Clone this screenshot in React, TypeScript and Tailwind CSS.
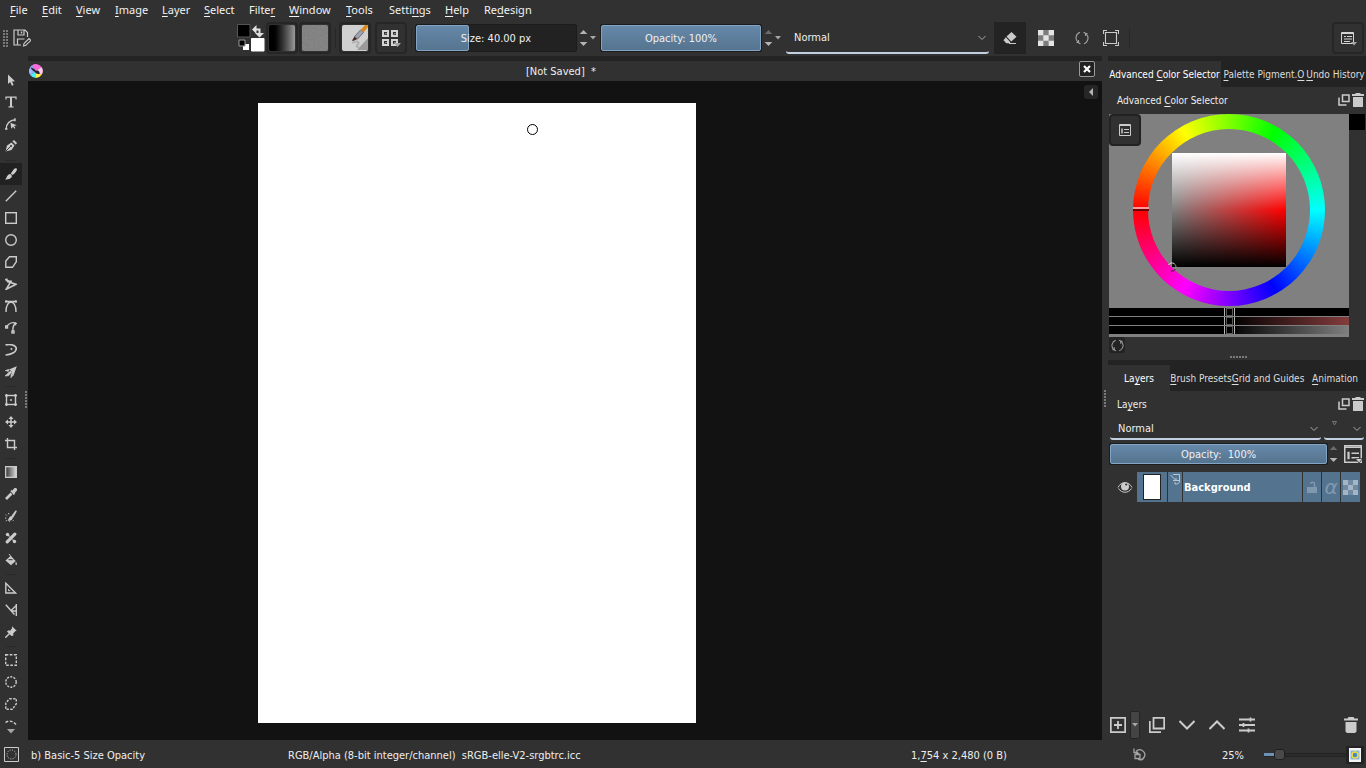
import type { ReactNode } from 'react';

const hotkey = (text: string, at: number) => (
  <>
    {text.slice(0, at)}
    <span className="underline underline-offset-2">{text[at]}</span>
    {text.slice(at + 1)}
  </>
);

const menus: [string, number, string][] = [
  ['File', 0, 'w-8'],
  ['Edit', 0, 'w-[34px]'],
  ['View', 0, 'w-[39px]'],
  ['Image', 0, 'w-[47px]'],
  ['Layer', 0, 'w-[42px]'],
  ['Select', 0, 'w-[45px]'],
  ['Filter', 5, 'w-10'],
  ['Window', 0, 'w-[57px]'],
  ['Tools', 0, 'w-[43px]'],
  ['Settings', 5, 'w-14'],
  ['Help', 0, 'w-[39px]'],
  ['Redesign', 2, 'w-16'],
];

function Icon({ size = 12, label, children }: { size?: number; label?: string; children: ReactNode }) {
  return (
    <svg
      width={size}
      height={size}
      viewBox={`0 0 ${size} ${size}`}
      fill="none"
      stroke="#cbcbcb"
      strokeWidth="1.4"
      className="shrink-0"
      aria-label={label}
    >
      {children}
    </svg>
  );
}

const F = '#cbcbcb';

const tools: [string, ReactNode][][] = [
  [
    ['Select Shapes', <path d="M3 0.5v9.6l2.2-2 1.7 3.7 1.7-.8L7 7.4l3-.2z" fill={F} stroke="none" />],
    ['Text', <path d="M.4.5h11.2v3h-1L10.300 1.800H7v8.500l1.600.300v.900H3.400v-.900l1.600-.300V1.800H1.700L1.400 3.500H.400z" fill={F} stroke="none" />],
    ['Edit Shapes', <><path d="M1.200 11c0-5 3.500-9 9-9.300M0 11h2.500M10 .3v3" /><path d="M5.500 4.800l6.300 2.400-2.700.9 1.300 2-1 .7-1.300-2-1.900 1.900z" fill={F} stroke="none" /></>],
    ['Calligraphy', <><path d="M.500 11.500L2 5.500 6.500 2.500l3 3L6.500 10z" fill={F} stroke="none" /><path d="M7.300 1.200L9 0l3 3-1.200 1.700z" fill={F} stroke="none" /><path d="M.5 11.500L5.500 6.500" stroke="#313131" strokeWidth="1" /><circle cx="6" cy="6" r="1" fill="#313131" stroke="none" /></>],
  ],
  [
    ['Freehand Brush', <><path d="M5.800 5.500L8.800 1.200C10 0 12.500-.3 11.800 2.200 11.300 4 9 6 7.300 7z" fill={F} stroke="none" /><path d="M5.300 6l1.500 1.600c.5 2.500-2.500 4-6.800 4C2 10.500 1.400 6.500 5.300 6z" fill={F} stroke="none" /></>],
    ['Line', <path d="M.8 11.200L11.200.8" />],
    ['Rectangle', <rect x=".7" y=".7" width="10.600" height="10.600" />],
    ['Ellipse', <circle cx="6" cy="6" r="5.300" />],
    ['Polygon', <path d="M4.500.7h6.800v5L7.500 11.300H.8V5z" />],
    ['Polyline', <path d="M1.500.5L2.500 3.500 11 6.300 1.300 11.200 6.500 2.500M0 1.500L5 3.500" strokeWidth="1.600" />],
    ['Bezier Curve', <><path d="M0 1.500h12M1 12c0-6 2-9.500 5-10 3 .5 5 4 5 10" /><circle cx="1.300" cy="1.500" r="1.200" fill={F} stroke="none" /><circle cx="10.700" cy="1.500" r="1.200" fill={F} stroke="none" /></>],
    ['Freehand Path', <><path d="M1.500 4.800C4 1 8 0 11 1.500 8 3 7.500 5 8 9M10.500 .300v3" /><rect x=".5" y="4" width="2" height="2" /><rect x="7" y="9" width="2" height="2" /></>],
    ['Dynamic Brush', <><path d="M.5 1C5-.3 11 1 11.300 4.500 11.300 8 6 11 .5 11" strokeWidth="1.600" /><circle cx="6.500" cy="5" r="1" fill={F} stroke="none" /></>],
    ['Multibrush', <><path d="M11.800.2L7 6.300 4.500 3.300z M11.800.2L8.500 9.500 6.300 6.500z" fill={F} stroke="none" /><path d="M.3 4.500l4-1.200-1 2.200zM0 10l5.300-5 1.200 1.300-3 3.500zM5.800 11.800l.5-4.300 2 1.500z" fill={F} stroke={F} strokeWidth=".6" /></>],
  ],
  [
    ['Transform', <><rect x="1.500" y="1.500" width="9" height="9" /><path d="M0 1.500h3M1.500 0v3M9 1.500h3M10.500 0v3M0 10.500h3M1.500 9v3M9 10.500h3M10.500 9v3" /><circle cx="6" cy="6" r="1" fill={F} stroke="none" /></>],
    ['Move', <><path d="M6 1.500v9M1.500 6h9" /><path d="M6 0l2.500 3h-5zM6 12l2.500-3h-5zM0 6l3-2.500v5zM12 6L9 3.500v5z" fill={F} stroke="none" /></>],
    ['Crop', <path d="M2.500 0v9.500H12M0 2.500h9.500V12" />],
  ],
  [
    ['Gradient', <><defs><linearGradient id="tg"><stop stopColor="#333" /><stop offset="1" stopColor="#ddd" /></linearGradient></defs><rect x=".6" y=".6" width="10.800" height="10.800" fill="url(#tg)" /></>],
    ['Color Sampler', <><path d="M6 2.500l3.500 3.800" strokeWidth="1.800" /><path d="M1 11l5.500-5.500" strokeWidth="2.600" /><path d="M7.500 3.500l2-2.500c1.200-1 2.500.2 1.500 1.500L8.800 5z" fill={F} stroke={F} /></>],
    ['Colorize Mask', <><path d="M6 6.500L10.300.8c.8-.8 1.700 0 1.300.9L8 8z" fill={F} stroke="none" /><path d="M6 6.300l1.800 1.500C7.500 10.500 5 11 2.500 10.500 4 9.500 3.500 7 6 6.300z" fill={F} stroke="none" /><path d="M.8 4.500l1 1M3.500 3l.4 1.300M0 8h1.300M.8 11l1-.8M4.500 12v-.8M8.500 11l-.6-.8" strokeWidth="1" /></>],
    ['Smart Patch', <><path d="M2.200 9.800L9.800 2.200" strokeWidth="3.200" strokeLinecap="round" /><circle cx="2.500" cy="2.500" r="1.700" fill={F} stroke="none" /><circle cx="9.500" cy="9.500" r="1.700" fill={F} stroke="none" /><path d="M2.500 2.500l2 2M7.500 7.500l2 2" strokeWidth="1.200" /></>],
    ['Fill', <><path d="M.5 6.500L5.500 2l5.200 5L6 11.300z" fill={F} stroke="none" /><path d="M4 0l4 5" strokeWidth="1" /><path d="M3.500 5.700h4" stroke="#313131" strokeWidth="1" /><path d="M11 7.500c1.200 2.500 1.200 3.500.2 3.500s-1-1.500-.2-3.500z" fill={F} stroke="none" /></>],
  ],
  [
    ['Assistant', <><path d="M.8 1.200v9.800h9.800z" /><path d="M3.500 7v1.700h1.700" strokeWidth="1" /></>],
    ['Measure', <path d="M.8.800l8.700 9.700M11.300 0v12M11.300 1.500L6 6.500M6.500 7h5" />],
    ['Reference Images', <><path d="M7 .3l4.700 4.500-1.500.5-2 2.200.2 2L6.500 10 1.900 5.500l1.400-1 2.200.1L7 2.200z" fill={F} stroke="none" /><path d="M4.500 7.500L.3 11.700" /></>],
  ],
  [
    ['Rectangular Selection', <rect x=".7" y=".7" width="10.600" height="10.600" strokeDasharray="2.600 1.500" />],
    ['Elliptical Selection', <circle cx="6" cy="6" r="5.200" strokeDasharray="2.100 1.200" />],
    ['Polygonal Selection', <path d="M4.500.7h6.800v5L7.500 11.300H.8V5z" strokeDasharray="2.300 1.400" />],
  ],
];

const fill = 'bg-gradient-to-b from-[#6688a9] to-[#55748f] border border-[#82a5c6] rounded-[2px]';

function Slider({ name, text, width, bar, low }: { name: string; text: string; width: string; bar: string; low?: boolean }) {
  return (
    <label className={`relative flex ${width} ${low ? 'h-[22px]' : 'h-7'} rounded-[2px] border border-[#1c1c1c] bg-[#222222] text-[11px] text-[#f0f0f0]`}>
      <span className={`${bar} ${fill}`} />
      <span className="absolute inset-0 flex items-center justify-center whitespace-pre pt-[2px]">{text}</span>
      <input type="range" aria-label={name} defaultValue={100} className="absolute inset-0 w-full opacity-0" />
    </label>
  );
}

function Spin({ dimUp }: { dimUp?: boolean }) {
  return (
    <svg width="9" height="18" viewBox="0 0 9 18" className="shrink-0" aria-hidden="true">
      <path d="M4.500 1L8.300 5H.700z" fill={dimUp ? '#6b6b6b' : '#b4b4b4'} />
      <path d="M4.500 17L8.300 13H.700z" fill="#b4b4b4" />
    </svg>
  );
}

function Down({ className = '' }: { className?: string }) {
  return (
    <svg width="6" height="4" viewBox="0 0 6 4" className={`shrink-0 ${className}`} fill="#a6a6a6" aria-hidden="true">
      <path d="M0 0h6L3 3.500z" />
    </svg>
  );
}

function Combo({ label, width, height, value }: { label: string; width: string; height: string; value: string }) {
  return (
    <div className={`relative flex ${width} ${height} items-center`}>
      <select aria-label={label} className="h-full w-full appearance-none rounded-[3px] border-b-2 border-[#c3cfe2] bg-transparent pl-2 pt-[2px] text-[11px] text-[#eeeeee] outline-none">
        <option>{value}</option>
      </select>
      <svg width="8" height="6" viewBox="0 0 8 6" className="pointer-events-none absolute right-[3px]" fill="none" stroke="#a9a9a9" aria-hidden="true">
        <path d="M.5 1l3.500 3.500L7.500 1" />
      </svg>
    </div>
  );
}

function Grip({ rows, cols = 1, horizontal }: { rows: number; cols?: number; horizontal?: boolean }) {
  return (
    <div className={`grid gap-px ${horizontal ? 'grid-flow-col' : cols === 2 ? 'grid-cols-2' : 'grid-cols-1'}`}>
      {Array.from({ length: rows * cols }, (_, i) => (
        <span key={i} className="size-[2px] bg-[#7a7a7a]" />
      ))}
    </div>
  );
}

const Separator = () => <span className="h-5 w-px shrink-0 bg-[#282828]" />;

function Checker({ size, light, dark }: { size: number; light: string; dark: string }) {
  return (
    <svg width={size} height={size} viewBox="0 0 3 3" aria-hidden="true">
      <path d="M0 0h3v3H0z" fill={dark} />
      <path d="M0 0h1v1H0zM2 0h1v1H2zM1 1h1v1H1zM0 2h1v1H0zM2 2h1v1H2z" fill={light} />
    </svg>
  );
}

function Cycle({ size }: { size: number }) {
  return (
    <svg width={size} height={size} viewBox="0 0 14 14" fill="none" stroke="#a2a2a2" strokeWidth="1.100" aria-hidden="true">
      <path d="M5 1.300A6 6 0 0 0 2.800 11.200M9 12.700A6 6 0 0 0 11.200 2.800" />
      <path d="M5.500 12.800A6 6 0 0 1 3.300 11.500M8.500 1.200A6 6 0 0 1 10.700 2.500" />
      <path d="M3.500 9v2.500H1.500M10.500 5V2.500h2" />
    </svg>
  );
}

function ListIcon({ size, arrow }: { size: number; arrow?: boolean }) {
  return (
    <svg width={size} height={size} viewBox="0 0 12 12" fill="none" stroke={F} aria-hidden="true">
      <path d="M.5.500h11v11H.500z" />
      <path d="M0 1.500h12M5 5.500h5M5 8.500h5" />
      <path d="M3 4.500v5" strokeWidth="1.500" />
      {arrow && <path d="M7.500 9h5l-2.500 3z" fill={F} stroke="#313131" strokeWidth=".5" />}
    </svg>
  );
}

function ToolButton({ label, children }: { label: string; children: ReactNode }) {
  return (
    <button aria-label={label} className="flex size-8 shrink-0 items-center justify-center rounded-[4px] border-2 border-[#262626]">
      {children}
    </button>
  );
}

function MenuBar() {
  return (
    <nav className="flex h-5 shrink-0 items-center pl-[10px] font-['Noto_Sans',sans-serif] text-[11px] text-[#f2f2f2]">
      {menus.map(([name, at, width]) => (
        <button key={name} className={`${width} text-left`}>{hotkey(name, at)}</button>
      ))}
    </nav>
  );
}

function MainToolbar() {
  return (
    <div className="flex h-9 shrink-0 items-center pl-[3px] pr-[2px]">
      <Grip rows={6} cols={2} />
      <button aria-label="Save" className="ml-[5px]">
        <Icon size={18}>
          <path d="M14.500 8V3.500L12 1H1v15h7M5 1v5h6V1M4.500 16v-6h7" strokeWidth="1.200" />
          <path d="M8.500 2.500v2" />
          <path d="M10.500 17l.5-2.500 5-5 1.800 1.800-5 5z" strokeWidth="1.100" />
        </Icon>
      </button>

      <button aria-label="Foreground and background colors" className="ml-[206px]">
        <svg width="28" height="28" viewBox="0 0 28 28">
          <path d="M.5.5h12.500v12.500H.5z" fill="#000" stroke="#555" />
          <path d="M14.500 14.500H27V27H14.500z" fill="#fff" stroke="#fff" />
          <path d="M6 20h6v6H6z" fill="#fff" />
          <path d="M2 16h6v6H2z" fill="#000" stroke="#999" />
          <path d="M15 5.500L19.500 1v3.500h4V9H27l-4.500 4.500L18 9h3.500V6.500h-2V10z" fill="#e0e0e0" />
        </svg>
      </button>
      <div className="ml-px flex gap-px">
        <ToolButton label="Gradients">
          <span className="size-[26px] rounded-[2px] bg-linear-to-r from-black from-10% to-[#9a9a9a]" />
        </ToolButton>
        <ToolButton label="Patterns">
          <svg width="26" height="26" aria-hidden="true">
            <filter id="grain"><feTurbulence type="fractalNoise" baseFrequency=".5" numOctaves="2" /><feColorMatrix values="0 0 0 0 .5 0 0 0 0 .5 0 0 0 0 .5 .5 0 0 0 0" /></filter>
            <rect width="26" height="26" rx="2" fill="#7b7b7b" />
            <rect width="26" height="26" filter="url(#grain)" opacity=".5" />
          </svg>
        </ToolButton>
      </div>
      <div className="ml-1 flex items-center gap-[3px]">
        <Separator />
        <ToolButton label="Brush editor">
          <svg width="26" height="26" aria-hidden="true">
            <rect width="26" height="26" rx="2" fill="#d0d0d0" />
            <path d="M26 13L15 25h11z" fill="#777" opacity=".6" />
            <path d="M10 18c5-3 8-1 6 1s-2 3 1 3" fill="none" stroke="#b0b0b0" strokeWidth="2" />
            <path d="M10 15.500l2.500-4 3 2.500-4.500 2z" fill="#4a2a20" />
            <path d="M12.500 11.500l6-6.500 3 2.500-6 6.500z" fill="#a0a2b4" stroke="#5d5468" strokeWidth=".8" />
            <path d="M18.500 5L23 0h3v2l-4.500 5.500z" fill="#d88a22" />
          </svg>
        </ToolButton>
      </div>
      <div className="ml-1 flex items-center gap-1">
        <ToolButton label="Brush presets">
          <svg width="20" height="20" viewBox="0 0 20 20" fill="none" stroke="#d4d4d4" strokeWidth="2" aria-hidden="true">
            <path d="M2 3h5v5H2zM11 3h5v5h-5zM2 12h5v5H2zM11 12h5v5h-5z" />
            <path d="M4 6.500l1.500-1.500M13 6.500l1.500-1.500M4 15.500L5.500 14M13 15.500l1.500-1.500" strokeWidth="1" />
            <path d="M13 15h7l-3.500 4z" fill="#a6a6a6" stroke="none" />
          </svg>
        </ToolButton>
        <Separator />
      </div>

      <div className="ml-[3px] flex items-center">
        <Slider name="Size" text="Size: 40.00 px" width="w-[162px]" bar="w-1/3" />
        <div className="ml-[2px] mr-1 flex w-[17px] items-center justify-between"><Spin /><Down /></div>
        <Slider name="Opacity" text="Opacity: 100%" width="w-[162px]" bar="w-full" />
        <div className="ml-[2px] mr-[5px] flex w-[17px] items-center justify-between"><Spin dimUp /><Down /></div>
        <Combo label="Blending mode" width="w-[203px]" height="h-[31px]" value="Normal" />
      </div>

      <button aria-label="Eraser mode" className="ml-[5px] flex size-8 items-center justify-center bg-[#232323]">
        <svg width="14" height="14" viewBox="0 0 14 14" fill={F} aria-hidden="true">
          <path d="M8.500 1L13.500 5.800 8.300 10.500 3.500 5.500zM2.800 6.200l4.700 5-1 1H3.300L.5 9.300zM6 12h7v1H6z" />
        </svg>
      </button>
      <button aria-label="Preserve alpha" className="ml-3"><Checker size={16} light="#e4e4e4" dark="#7c7c7c" /></button>
      <button aria-label="Reload preset" className="ml-[21px]"><Cycle size={14} /></button>
      <button aria-label="Wrap around mode" className="ml-[14px]">
        <Icon size={16}><path d="M2.500 2.500h11v11h-11zM.500 4V.500H4M12 .500h3.500V4M15.500 12v3.500H12M4 15.500H.500V12" strokeWidth="1.100" /></Icon>
      </button>
      <div className="ml-[10px] flex"><Separator /></div>
      <div className="ml-auto">
        <ToolButton label="Choose workspace">
          <svg width="18" height="16" viewBox="0 0 18 16" fill="none" stroke="#d4d4d4" aria-hidden="true">
            <path d="M2.500 2.500h12v11h-12zM2 3.500h13" />
            <path d="M5 6.500h2M8 6.500h5M5 9h8M5 11.500h6" />
            <path d="M12 12h6l-3 3.500z" fill="#a6a6a6" stroke="none" />
          </svg>
        </ToolButton>
      </div>
    </div>
  );
}

function Toolbox() {
  return (
    <aside className="flex w-7 shrink-0 overflow-hidden pt-[13px]">
      <div className="flex w-[22px] flex-col">
        {tools.map((group, g) => (
          <div key={g}>
            {g > 0 && <div className="flex h-[6px] items-center justify-center"><span className="h-px w-[10px] bg-[#292929]" /></div>}
            {group.map(([name, glyph]) => (
              <button key={name} aria-label={name} className={`flex h-[22px] w-[22px] items-center justify-center ${name === 'Freehand Brush' ? 'bg-[#212121]' : ''}`}>
                <Icon>{glyph}</Icon>
              </button>
            ))}
          </div>
        ))}
        <button aria-label="More tools" className="flex flex-col items-center gap-[3px] pt-[5px]">
          <svg width="12" height="6" viewBox="0 0 12 6" fill="none" stroke={F} strokeWidth="1.400"><path d="M.5 2.500C4 0 8 1 11 4.500" strokeDasharray="3 1.500" /></svg>
          <svg width="8" height="5" viewBox="0 0 8 5" fill="#a6a6a6"><path d="M0 0h8L4 4.500z" /></svg>
        </button>
      </div>
      <div className="ml-[3px] flex items-center pb-[10px]"><Grip rows={6} /></div>
    </aside>
  );
}

function Document() {
  return (
    <main className="flex min-w-0 flex-1 flex-col border-t-[5px] border-[#232323]">
      <div className="flex h-5 shrink-0 items-center pl-[1px] pr-[7px] text-[11px] text-[#eeeeee]">
        <svg width="14" height="14" viewBox="0 0 14 14" aria-hidden="true">
          <path d="M7 7L3 1.300A6.900 6.900 0 0 1 12.500 3z" fill="#ff6adf" />
          <path d="M7 7l5.500-4A6.900 6.900 0 0 1 12.500 11z" fill="#ffc9ee" />
          <path d="M7 7l5.500 4A6.900 6.900 0 0 1 7 13.900z" fill="#fff04a" />
          <path d="M7 7v6.900A6.900 6.900 0 0 1 1.200 11z" fill="#4af0ff" />
          <path d="M7 7l-5.800 4A6.900 6.900 0 0 1 3 1.300z" fill="#9fb8ff" />
          <path d="M1.500 3.500c2 0 4 1.500 5.500 3.500 2-1 3.500 0 3.700 2.700C8.500 10.500 6.500 9.500 6 8 4 7 2.500 5.500 1.500 3.500z" fill="#2c2433" />
        </svg>
        <span className="flex-1 whitespace-pre pt-[2px] text-center">[Not Saved]{'  '}*</span>
        <button aria-label="Close document" className="-mt-1 flex size-4 items-center justify-center rounded-[2px] border border-[#9a9a9a] bg-[#222222]">
          <svg width="8" height="8" viewBox="0 0 8 8" stroke="#fff" strokeWidth="2.200"><path d="M1 1l6 6M7 1L1 7" /></svg>
        </button>
      </div>
      <div className="relative flex-1 overflow-hidden bg-[#121212] pl-[230px] pt-[22px]">
        <div className="relative h-[620px] w-[438px] bg-white">
          <span className="absolute left-[269px] top-[21px] size-[11px] rounded-full border border-black" />
        </div>
        <button aria-label="Show floating message" className="absolute right-1 top-1 flex size-[14px] items-center justify-center rounded-[3px] bg-[#262626]">
          <svg width="4" height="8" viewBox="0 0 4 8" fill="#b4b4b4"><path d="M4 0v8L0 4z" /></svg>
        </button>
      </div>
    </main>
  );
}

function DockTitle({ children }: { children: ReactNode }) {
  return (
    <header className="flex h-[27px] shrink-0 items-center justify-between pl-[9px] pr-[2px] text-[10px] text-[#eeeeee]">
      <h2 className="pt-px">{children}</h2>
      <div className="flex items-center gap-[2px] pb-[2px]">
        <button aria-label="Float docker">
          <Icon size={12}><path d="M4.500 1h6.500v6.500H4.500z" strokeWidth="1.500" /><path d="M1 3.500V11h7.500" strokeWidth="1.500" /></Icon>
        </button>
        <button aria-label="Close docker">
          <svg width="12" height="14" viewBox="0 0 12 14" fill={F}><path d="M4 0h4l1 1h3v2H0V1h3zM1 4h10v10H1z" /></svg>
        </button>
      </div>
    </header>
  );
}

const tab = 'flex h-full shrink-0 items-center justify-center whitespace-nowrap pt-[2px]';

function Handle() {
  return (
    <span className="absolute left-[115px] flex h-full w-[11px] border-x border-[#b4b4b4] px-px">
      <span className="w-full border border-[#5a5a5a]" />
    </span>
  );
}

function ColorDock() {
  return (
    <section className="flex shrink-0 flex-col">
      <div role="tablist" className="flex h-[31px] overflow-hidden border-t-[5px] border-[#232323] bg-[#232323] text-[10px] text-[#dddddd]">
        <button role="tab" className={`${tab} w-[113px] bg-[#313131] text-white`}><span>{hotkey('Advanced Color Selector', 9)}</span></button>
        <button role="tab" className={`${tab} w-9`}><span>{hotkey('Palette', 0)}</span></button>
        <button role="tab" className={`${tab} w-12`}><span>Pigment.<span className="underline underline-offset-2">O</span></span></button>
        <button role="tab" className={`${tab} w-[61px]`}><span>{hotkey('Undo History', 0)}</span></button>
      </div>
      <DockTitle>{hotkey('Advanced Color Selector', 9)}</DockTitle>
      <div className="flex pl-px">
        <div className="flex w-60 flex-col bg-[#808080] pb-[3px]">
          <div className="relative flex h-[194px] items-start justify-center">
            <button aria-label="Selector settings" className="absolute left-0 top-0 flex size-8 items-center justify-center rounded-[4px] border-2 border-[#222222] bg-[#313131]">
              <ListIcon size={12} />
            </button>
            <div className="flex size-48 items-center justify-center rounded-full bg-[conic-gradient(from_270deg,#f00,#ff0,#0f0,#0ff,#00f,#f0f,#f00)]">
              <div className="flex size-[162px] items-center justify-center rounded-full bg-[#808080]">
                <div className="size-[114px] bg-[linear-gradient(to_bottom,#fff,rgba(255,255,255,0)_50%,rgba(0,0,0,0)_50%,#000),linear-gradient(to_right,#808080,#f00)]" />
              </div>
            </div>
            <span className="absolute left-6 top-[93px] h-1 w-4 border-b-2 border-t-2 border-b-[#6b0000] border-t-[#ff9a9a]" />
            <svg width="10" height="10" viewBox="0 0 10 10" fill="none" className="absolute left-[58px] top-[148px]">
              <path d="M1.500 3A4 4 0 0 1 7 1.500" stroke="#ddd" /><path d="M7 1.500A4 4 0 0 1 8.500 7" stroke="#999" /><path d="M8.500 7A4 4 0 0 1 4 9" stroke="#222" />
            </svg>
          </div>
          <div className="flex flex-col gap-px">
            <div className="relative h-2 bg-black"><Handle /></div>
            <div className="relative h-2 bg-[linear-gradient(to_right,#000_50%,#843c3c)]"><Handle /></div>
            <div className="relative h-2 bg-[linear-gradient(to_right,#000_50%,#808080)]"><Handle /></div>
          </div>
        </div>
        <span className="size-4 bg-black" />
      </div>
      <div className="flex h-[23px] items-start pl-px">
        <button aria-label="Refresh history" className="flex size-4 items-center justify-center rounded-[3px] bg-[#232323]"><Cycle size={13} /></button>
        <div className="ml-[105px] flex h-full items-end pb-[2px]"><Grip rows={6} horizontal /></div>
      </div>
    </section>
  );
}

function LayersDock() {
  return (
    <section className="flex min-h-0 flex-1 flex-col">
      <div role="tablist" className="flex h-[31px] shrink-0 overflow-hidden border-t-[5px] border-[#232323] bg-[#232323] text-[10px] text-[#dddddd]">
        <button role="tab" className={`${tab} w-[62px] bg-[#313131] text-white`}><span>{hotkey('Layers', 2)}</span></button>
        <button role="tab" className={`${tab} w-[62px]`}><span>{hotkey('Brush Presets', 0)}</span></button>
        <button role="tab" className={`${tab} w-[72px]`}><span>{hotkey('Grid and Guides', 0)}</span></button>
        <button role="tab" className={`${tab} w-[62px]`}><span>{hotkey('Animation', 0)}</span></button>
      </div>
      <DockTitle>{hotkey('Layers', 2)}</DockTitle>
      <div className="flex items-center justify-between pl-[2px] pr-[2px]">
        <Combo label="Layer blending mode" width="w-[211px]" height="h-[22px]" value="Normal" />
        <div className="relative flex">
          <Combo label="Layer filter" width="w-10" height="h-[22px]" value="" />
          <svg width="5" height="6" viewBox="0 0 5 6" className="absolute left-2 top-[3px]" fill="none" stroke="#777"><path d="M.5.500h4L2.500 4z" /></svg>
        </div>
      </div>
      <div className="mt-[3px] flex items-center pl-px pr-1">
        <Slider name="Layer opacity" text="Opacity:  100%" width="w-[219px]" bar="w-full" low />
        <div className="ml-px flex"><Spin dimUp /></div>
        <button aria-label="Layer list options" className="ml-auto"><ListIcon size={18} arrow /></button>
      </div>

      <div className="mt-[7px] flex h-[30px] shrink-0 items-stretch pl-[5px] pr-[6px]">
        <button aria-label="Toggle visibility" className="flex flex-1 items-center justify-center">
          <svg width="16" height="14" viewBox="0 0 16 14" fill="none" stroke={F}>
            <path d="M1 7.500C4 1 12 1 15 7.500M1.500 8.500c3 5 10 5 13 0" />
            <circle cx="8" cy="6.500" r="4" fill={F} stroke="none" /><circle cx="9.200" cy="4.500" r="1.100" fill="#313131" stroke="none" />
          </svg>
        </button>
        <div className="flex gap-px text-[11px] text-white">
          <div className="flex w-[30px] items-center justify-center bg-[#53738f]"><span className="h-[26px] w-[18px] border border-[#222222] bg-white" /></div>
          <div className="flex w-[14px] justify-center bg-[#53738f] pt-[2px]">
            <svg width="11" height="11" viewBox="0 0 11 11" fill="none" stroke="#b9c7d4"><path d="M3 .500h6.500V8L7.500 10H5V8M.500 1l5.500 5.500h3M3 6.500h3V4" /></svg>
          </div>
          <div className="flex w-[119px] items-center bg-[#53738f] pl-px pt-[2px] font-bold">Background</div>
          <button aria-label="Lock layer" className="flex w-[18px] items-center justify-center bg-[#53738f]">
            <svg width="12" height="12" viewBox="0 0 12 12"><path d="M1 6h10v6H1z" fill="#8199ae" /><path d="M8.500 6V3c0-2.500-3.500-2.500-4 0" fill="none" stroke="#8199ae" strokeWidth="1.500" /></svg>
          </button>
          <button aria-label="Inherit alpha" className="flex w-[18px] items-center justify-center bg-[#53738f] font-['DejaVu_Sans',sans-serif] text-xl italic leading-none text-[#8199ae]">α</button>
          <button aria-label="Alpha lock" className="flex w-[19px] items-center justify-center bg-[#53738f]"><Checker size={15} light="#a4b5c4" dark="#6f8aa2" /></button>
        </div>
      </div>

      <div className="mt-auto flex h-[30px] shrink-0 items-center pl-[2px] pr-[7px]">
        <button aria-label="Add layer"><Icon size={16}><path d="M.800.800h14.400v14.400H.800zM8 4v8M4 8h8" strokeWidth="1.800" /></Icon></button>
        <button aria-label="Add layer options" className="ml-1 flex h-7 w-[10px] items-center justify-center rounded-[2px] border border-[#242424] bg-[#444444]"><Down /></button>
        <button aria-label="Duplicate layer" className="ml-[9px]"><Icon size={16}><path d="M4.500.800h10.700v10.700H4.500zM.800 4v11.200H12" strokeWidth="1.800" /></Icon></button>
        <button aria-label="Move layer down" className="ml-[14px]"><Icon size={16}><path d="M.5 4l7.500 7.500L15.500 4" strokeWidth="2" /></Icon></button>
        <button aria-label="Move layer up" className="ml-[14px]"><Icon size={16}><path d="M.5 12L8 4.500l7.500 7.500" strokeWidth="2" /></Icon></button>
        <button aria-label="Layer properties" className="ml-[14px]"><Icon size={16}><path d="M0 2.500h16M0 8h16M0 13.500h16M11.500.500v4M4.500 6v4M9.500 11.500v4" strokeWidth="1.800" /></Icon></button>
        <button aria-label="Delete layer" className="ml-auto">
          <svg width="16" height="16" viewBox="0 0 16 16" fill={F}><path d="M5.500 0h5l1 1.500H15v2H1v-2h3.500zM2.500 5h11v9.500L12 16H4l-1.500-1.500z" /></svg>
        </button>
      </div>
    </section>
  );
}

function StatusBar() {
  return (
    <footer className="flex h-7 shrink-0 items-center pl-1 pr-[2px] pt-px text-[11px] text-[#eeeeee]">
      <button aria-label="Selection display">
        <Icon size={15}><path d="M.5.500h14v14H.500z" strokeWidth="1" /><circle cx="7.500" cy="7.500" r="4.500" strokeWidth="1" strokeDasharray="1 1.350" /></Icon>
      </button>
      <span className="ml-3 w-[257px] pt-[2px]">b) Basic-5 Size Opacity</span>
      <span className="flex-1 whitespace-pre pt-[2px]">RGB/Alpha (8-bit integer/channel){'  '}sRGB-elle-V2-srgbtrc.icc</span>
      <span className="w-[222px] pt-[2px]">{hotkey('1,754 x 2,480 (0 B)', 2)}</span>
      <button aria-label="Reset rotation" className="w-[89px]">
        <svg width="13" height="13" viewBox="0 0 13 13" fill="none" stroke="#a2a2a2" strokeWidth="1.300">
          <path d="M3 3.500a5 5 0 1 1 2 8M1 .500v4h4M2 6.500h5v4H2zM3 6.500c0-2 3-2 3 0" />
        </svg>
      </button>
      <span className="w-[42px] pt-[2px]">25%</span>
      <label className="relative flex h-4 w-[82px] items-center">
        <span className="h-1 w-full border border-[#242424] bg-[#2b2b2b]" />
        <span className="absolute left-0 h-[3px] w-[11px] bg-[#6c93b5]" />
        <span className="absolute left-[10px] size-[11px] rounded-[3px] border border-[#1f1f1f] bg-[#4a4a4a]" />
        <input type="range" aria-label="Zoom" defaultValue={15} className="absolute inset-0 w-full opacity-0" />
      </label>
      <button aria-label="Fit page" className="flex size-[18px] items-center justify-center bg-[#232323]">
        <svg width="12" height="14" viewBox="0 0 12 14">
          <path d="M0 0h12v14H0z" fill="#f4f4f4" />
          <path d="M1.500 2.500h9v9h-9z" fill="#83b0dd" />
          <circle cx="6" cy="7" r="3" fill="#4d86c6" stroke="#f0dc3c" strokeWidth="1.500" />
        </svg>
      </button>
    </footer>
  );
}

export default function App() {
  return (
    <div className="flex h-screen flex-col overflow-hidden bg-[#313131] font-['DejaVu_Sans_Condensed','DejaVu_Sans',sans-serif] leading-4 select-none">
      <MenuBar />
      <MainToolbar />
      <div className="flex min-h-0 flex-1">
        <Toolbox />
        <Document />
        <div className="flex w-[264px] shrink-0">
          <div className="flex w-[6px] shrink-0 items-center justify-center"><Grip rows={6} /></div>
          <div className="flex min-w-0 flex-1 flex-col">
            <ColorDock />
            <LayersDock />
          </div>
        </div>
      </div>
      <StatusBar />
    </div>
  );
}
